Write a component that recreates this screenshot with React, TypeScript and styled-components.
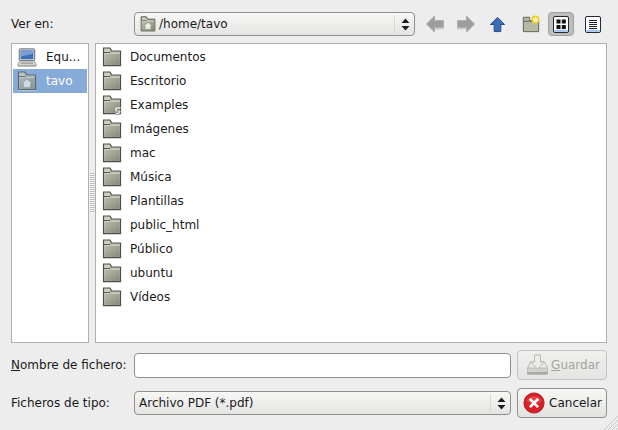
import styled, { createGlobalStyle } from "styled-components";

const GlobalStyle = createGlobalStyle`
  html, body {
    margin: 0;
    padding: 0;
    background: #ededed;
  }
`;

const Dialog = styled.div`
  width: 618px;
  height: 430px;
  box-sizing: border-box;
  padding: 12px 11px 0;
  position: relative;
  overflow: hidden;
  background: #ededed;
  color: #1a1a1a;
  font-family: "DejaVu Sans", sans-serif;
  font-size: 12px;
`;

const Toolbar = styled.div`
  display: flex;
  align-items: center;
  height: 24px;
`;

const FieldLabel = styled.label`
  width: 123px;
  flex: none;
  white-space: nowrap;
`;

const Combo = styled.div<{ $width: number }>`
  width: ${(p) => p.$width}px;
  height: 24px;
  box-sizing: border-box;
  flex: none;
  display: flex;
  align-items: center;
  gap: 3px;
  padding-left: 4px;
  border: 1px solid #8f8f8b;
  border-radius: 4px;
  background: linear-gradient(#f7f7f6, #e4e4e2);
  & > svg {
    margin-left: 1px;
  }
`;

const ComboText = styled.span`
  flex: 1;
`;

const ComboArrows = styled.span`
  width: 20px;
  height: 18px;
  flex: none;
  padding-left: 1px;
  box-sizing: border-box;
  border-left: 1px solid #d8d8d5;
  display: flex;
  align-items: center;
  justify-content: center;
`;

const NavGroup = styled.div`
  display: flex;
  align-items: center;
  margin-left: 5px;
`;

const NavButton = styled.span<{ $width: number; $active?: boolean }>`
  width: ${(p) => p.$width}px;
  height: 24px;
  box-sizing: border-box;
  flex: none;
  display: flex;
  align-items: center;
  justify-content: center;
  border-radius: 4px;
  ${(p) =>
    p.$active &&
    `
    background: #bdbdb9;
    border: 1px solid #a0a09c;
  `}
`;

const Panes = styled.div`
  display: flex;
  height: 300px;
  margin-top: 7px;
`;

const Pane = styled.div<{ $width: number }>`
  width: ${(p) => p.$width}px;
  box-sizing: border-box;
  flex: none;
  padding: 1px;
  border: 1px solid #b0b0ac;
  background: #fff;
`;

const Handle = styled.div`
  width: 6px;
  flex: none;
  display: flex;
  align-items: center;
  justify-content: center;
`;

const Grip = styled.div`
  width: 5px;
  height: 40px;
  background: repeating-linear-gradient(#bdbdb9 0 1px, #f8f8f7 1px 2px);
`;

const PlaceRow = styled.div<{ $selected?: boolean }>`
  height: 24px;
  display: flex;
  align-items: center;
  gap: 9px;
  padding-left: 4px;
  background: ${(p) => (p.$selected ? "#86abd9" : "transparent")};
  color: ${(p) => (p.$selected ? "#fff" : "#1a1a1a")};
`;

const FileRow = styled.div`
  height: 24px;
  display: flex;
  align-items: center;
  gap: 8px;
  padding-left: 5px;
`;

const FormRow = styled.div<{ $top: number }>`
  display: flex;
  align-items: center;
  height: 30px;
  margin-top: ${(p) => p.$top}px;
`;

const TextInput = styled.div`
  width: 377px;
  height: 25px;
  box-sizing: border-box;
  flex: none;
  border: 1px solid #8f8f8b;
  border-radius: 4px;
  background: #fff;
`;

const ActionButton = styled.button<{ $disabled?: boolean }>`
  width: 90px;
  height: 30px;
  margin-left: 6px;
  padding: 0 ${(p) => (p.$disabled ? "6px 0 7px" : "4px 0 5px")};
  flex: none;
  box-sizing: border-box;
  display: flex;
  align-items: center;
  justify-content: space-between;
  font: inherit;
  border-radius: 4px;
  border: 1px solid ${(p) => (p.$disabled ? "#c2c2be" : "#8f8f8b")};
  color: ${(p) => (p.$disabled ? "#a3a3a0" : "#1a1a1a")};
  background: ${(p) =>
    p.$disabled
      ? "linear-gradient(#f0f0ef, #e4e4e2)"
      : "linear-gradient(#f7f7f6, #e2e2e0)"};
`;

const Mnemonic = styled.span`
  text-decoration: underline;
`;

const ResizeGrip = styled.svg`
  position: absolute;
  right: 0;
  bottom: 0;
`;

const FolderIcon = ({
  link,
  home,
  size = 20,
  tinted,
}: {
  link?: boolean;
  home?: boolean;
  size?: number;
  tinted?: boolean;
}) => (
  <svg
    width={size}
    height={size}
    viewBox="0 0 20 20"
    style={{ flex: "none", opacity: tinted ? 0.72 : 1 }}
  >
    <defs>
      <linearGradient id="folderBody" x1="0" y1="0" x2="1" y2="1">
        <stop offset="0" stopColor="#bfc1ae" />
        <stop offset="1" stopColor="#85877a" />
      </linearGradient>
    </defs>
    <rect x="1" y="19" width="18" height="1" fill="#d2d2ce" />
    <path d="M1.5 1h6.5l1.5 3h9v14.5h-17z" fill="#cfd0c2" stroke="#4c4d44" strokeWidth="1.2" />
    <rect x="2.2" y="5.5" width="15.6" height="12.4" fill="url(#folderBody)" />
    <path d="M2 5.5h6l1-1" fill="none" stroke="#4c4d44" strokeWidth="0.9" />
    <path d="M2.5 6.5h15" stroke="#dcddd0" strokeWidth="0.7" />
    {home && (
      <path
        d="M10 8l-5 4.5h1.5v4h7v-4H15z"
        fill="#eceee8"
        stroke="#8a8c7c"
        strokeWidth="0.5"
      />
    )}
    {link && (
      <path
        d="M13 12h5.5v2h-3.4v1.2h2.6l1.1 1.2-1.5 3.1h-3.6l-.7-1.9h3.2l.5-.9h-3.7z"
        fill="#ecece8"
        stroke="#77786c"
        strokeWidth="0.5"
      />
    )}
  </svg>
);

const ComputerIcon = () => (
  <svg width="20" height="21" viewBox="0 0 22 22" style={{ flex: "none" }}>
    <rect x="2.5" y="1.5" width="17" height="13" rx="1" fill="#e8e8e6" stroke="#55565a" />
    <rect x="4" y="3" width="14" height="10" fill="#3f6fb8" />
    <path d="M4 3h14v4L4 10z" fill="#7a9fd6" />
    <path d="M2 16h18l1.5 3.5H.5z" fill="#e2e2de" stroke="#77787a" strokeWidth="0.7" />
    <path d="M4 17.5h14" stroke="#9a9a96" />
    <rect x="1" y="20" width="20" height="1" fill="#8a8a88" />
  </svg>
);

const StepperArrows = () => (
  <svg width="9" height="13" viewBox="0 0 9 13">
    <path d="M4.5 0.5l4 4.5h-8zM4.5 12.5L.5 8h8z" fill="#1c1c1c" />
  </svg>
);

const SideArrow = ({ flip }: { flip?: boolean }) => (
  <svg
    width="20"
    height="20"
    viewBox="0 0 20 20"
    style={{ transform: flip ? "scaleX(-1)" : undefined }}
  >
    <path d="M2 11.5L10 19v-3.5h9v-5h-9z" fill="#cfcfcc" />
    <path d="M1.5 10L9.5 2v4.5h9v7h-9V18z" fill="#9d9d9b" stroke="#b0b0ae" />
  </svg>
);

const UpArrow = () => (
  <svg width="17" height="17" viewBox="0 0 18 18">
    <path d="M9 1.5l7.5 7.5h-4v7.5h-7V9h-4z" fill="#3a6db5" stroke="#1f4682" />
  </svg>
);

const NewFolderIcon = () => (
  <svg width="18" height="18" viewBox="0 0 20 20">
    <path d="M1.5 2.5h7v4h10v12h-17z" fill="#b8b9a5" stroke="#5b5c50" />
    <path d="M1.5 7h17" stroke="#5b5c50" />
    <circle cx="15" cy="5" r="4.5" fill="#f0d020" />
    <path
      d="M15 1.8l1 2.2 2.3.2-1.7 1.6.5 2.3-2.1-1.2-2.1 1.2.5-2.3-1.7-1.6 2.3-.2z"
      fill="#fffbe0"
    />
  </svg>
);

const IconViewGlyph = () => (
  <svg width="16" height="17" viewBox="0 0 16 17">
    <rect x="0.5" y="0.5" width="15" height="16" rx="1.5" fill="#fff" stroke="#1e2a3a" />
    <path d="M1.5 14.8h13" stroke="#9cc3ef" strokeWidth="2" />
    <rect x="3.5" y="3.5" width="4" height="4" fill="#111" />
    <rect x="8.8" y="3.5" width="4" height="4" fill="#111" />
    <rect x="3.5" y="9" width="4" height="4" fill="#111" />
    <rect x="8.8" y="9" width="4" height="4" fill="#111" />
  </svg>
);

const ListViewGlyph = () => (
  <svg width="16" height="17" viewBox="0 0 16 17">
    <rect x="0.5" y="0.5" width="15" height="16" rx="1.5" fill="#fff" stroke="#1e2a3a" />
    <path d="M1.5 14.8h13" stroke="#9cc3ef" strokeWidth="2" />
    <path d="M4 4.5h8M4 6.5h8M4 8.5h8M4 10.5h8M4 12.5h8" stroke="#222" />
  </svg>
);

const SaveIcon = () => (
  <svg width="25" height="24" viewBox="0 0 24 24" style={{ flex: "none" }}>
    <path d="M2 15l3-6h4M22 15l-3-6h-4" fill="none" stroke="#b9b9b6" />
    <path d="M2 15h20v6H2z" fill="#d0d0cd" stroke="#bcbcb9" />
    <path d="M2 19h20v2.5H2z" fill="#a9a9a6" />
    <path d="M9 2h6v7h4l-7 7-7-7h4z" fill="#ececea" stroke="#b4b4b1" />
  </svg>
);

const CancelIcon = () => (
  <svg width="22" height="22" viewBox="0 0 24 24" style={{ flex: "none" }}>
    <circle cx="12" cy="12" r="11" fill="#d8202a" stroke="#a61a1f" />
    <path d="M4 10a8.5 8 0 0 1 16 0q-8 4-16 0z" fill="#ea6a6a" opacity="0.55" />
    <path d="M7.5 7.5l9 9M16.5 7.5l-9 9" stroke="#fff" strokeWidth="3" />
  </svg>
);

const files = [
  "Documentos",
  "Escritorio",
  "Examples",
  "Imágenes",
  "mac",
  "Música",
  "Plantillas",
  "public_html",
  "Público",
  "ubuntu",
  "Vídeos",
];

const App = () => {
  return (
    <>
      <GlobalStyle />
      <Dialog>
        <Toolbar>
          <FieldLabel>Ver en:</FieldLabel>
          <Combo $width={281}>
            <FolderIcon home size={16} />
            <ComboText>/home/tavo</ComboText>
            <ComboArrows>
              <StepperArrows />
            </ComboArrows>
          </Combo>
          <NavGroup>
            <NavButton $width={30}>
              <SideArrow />
            </NavButton>
            <NavButton $width={31}>
              <SideArrow flip />
            </NavButton>
            <NavButton $width={32}>
              <UpArrow />
            </NavButton>
            <NavButton $width={35}>
              <NewFolderIcon />
            </NavButton>
            <NavButton $width={26} $active>
              <IconViewGlyph />
            </NavButton>
            <NavButton $width={37}>
              <ListViewGlyph />
            </NavButton>
          </NavGroup>
        </Toolbar>
        <Panes>
          <Pane $width={78}>
            <PlaceRow>
              <ComputerIcon />
              <span>Equ...</span>
            </PlaceRow>
            <PlaceRow $selected>
              <FolderIcon home tinted />
              <span>tavo</span>
            </PlaceRow>
          </Pane>
          <Handle>
            <Grip />
          </Handle>
          <Pane $width={512}>
            {files.map((name) => (
              <FileRow key={name}>
                <FolderIcon link={name === "Examples"} />
                <span>{name}</span>
              </FileRow>
            ))}
          </Pane>
        </Panes>
        <FormRow $top={7}>
          <FieldLabel>
            <Mnemonic>N</Mnemonic>ombre de fichero:
          </FieldLabel>
          <TextInput />
          <ActionButton $disabled>
            <SaveIcon />
            <span>
              <Mnemonic>G</Mnemonic>uardar
            </span>
          </ActionButton>
        </FormRow>
        <FormRow $top={8}>
          <FieldLabel>Ficheros de tipo:</FieldLabel>
          <Combo $width={377}>
            <ComboText>Archivo PDF (*.pdf)</ComboText>
            <ComboArrows>
              <StepperArrows />
            </ComboArrows>
          </Combo>
          <ActionButton>
            <CancelIcon />
            <span>Cancelar</span>
          </ActionButton>
        </FormRow>
        <ResizeGrip width="16" height="16" viewBox="0 0 16 16">
          <path d="M16 2L2 16M16 6L6 16M16 10L10 16M16 14L14 16" stroke="#c8c8c5" />
        </ResizeGrip>
      </Dialog>
    </>
  );
};

export default App;
